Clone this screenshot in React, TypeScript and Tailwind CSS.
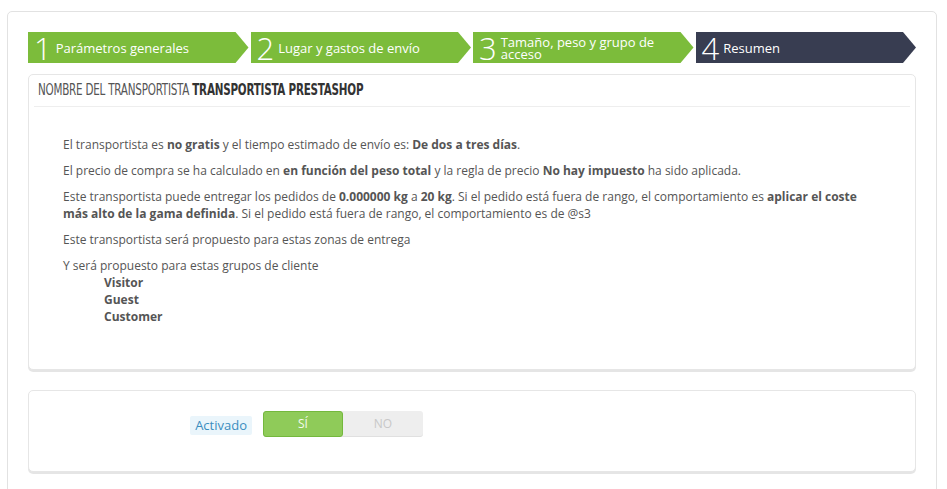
const steps = [
  { n: '1', label: 'Parámetros generales', active: false },
  { n: '2', label: 'Lugar y gastos de envío', active: false },
  { n: '3', label: 'Tamaño, peso y grupo de acceso', active: false },
  { n: '4', label: 'Resumen', active: true },
];

function Step({ n, label, active }: { n: string; label: string; active: boolean }) {
  return (
    <div
      className={`flex-1 h-[31px] flex items-center pl-[6px] pr-[22px] text-white [clip-path:polygon(0_0,calc(100%-13px)_0,100%_50%,calc(100%-13px)_100%,0_100%)] ${
        active ? 'bg-[#383d51]' : 'bg-[#7cbc3b]'
      }`}
    >
      <span className="text-[31px] font-light leading-none mr-[4px] mt-[1px]">{n}</span>
      <span className="text-[13px] leading-[12px] mt-[1px]">{label}</span>
    </div>
  );
}

export default function App() {
  return (
    <div className="bg-white min-h-screen pt-[11px] pl-[7px] pr-[10px] font-['Open_Sans',sans-serif] text-[#555]">
      <div className="border border-[#e2e2e2] rounded-[5px] px-[20px] pt-[20px] pb-[40px]">
        {/* Wizard steps */}
        <div className="flex gap-[2px]">
          {steps.map((s) => (
            <Step key={s.n} {...s} />
          ))}
        </div>

        {/* Summary panel */}
        <div className="mt-[11px] border border-[#e6e6e6] rounded-[5px] shadow-[0_2px_0_rgba(0,0,0,0.1)] px-[5px] pb-[44px] bg-white">
          <div className="h-[32px] flex items-center pl-[4px] border-b border-[#eee] overflow-hidden">
            <span className="inline-block whitespace-nowrap origin-left scale-x-[0.77] text-[15px] uppercase text-[#555] font-['Liberation_Sans_Narrow','DejaVu_Sans_Condensed','DejaVu_Sans',sans-serif] [font-stretch:condensed] tracking-[-0.3px]">
              Nombre del transportista <b className="text-[#333]">Transportista PrestaShop</b>
            </span>
          </div>
          <div className="pl-[29px] pr-[28px] pt-[29px] text-[12px] leading-[17px]">
            <p className="mb-[9px]">
              El transportista es <b>no gratis</b> y el tiempo estimado de envío es: <b>De dos a tres días</b>.
            </p>
            <p className="mb-[9px]">
              El precio de compra se ha calculado en <b>en función del peso total</b> y la regla de precio{' '}
              <b>No hay impuesto</b> ha sido aplicada.
            </p>
            <p className="mb-[9px]">
              Este transportista puede entregar los pedidos de <b>0.000000 kg</b> a <b>20 kg</b>. Si el pedido está
              fuera de rango, el comportamiento es <b>aplicar el coste más alto de la gama definida</b>. Si el pedido
              está fuera de rango, el comportamiento es de @s3
            </p>
            <p className="mb-[9px]">Este transportista será propuesto para estas zonas de entrega</p>
            <div>
              Y será propuesto para estas grupos de cliente
              <ul className="pl-[41px]">
                <li className="font-bold">Visitor</li>
                <li className="font-bold">Guest</li>
                <li className="font-bold">Customer</li>
              </ul>
            </div>
          </div>
        </div>

        {/* Active switch panel */}
        <div className="mt-[20px] border border-[#e6e6e6] rounded-[5px] shadow-[0_2px_0_rgba(0,0,0,0.1)] h-[82px] flex items-start pt-[20px] bg-white">
          <div className="w-[223px] flex justify-end pt-[5px]">
            <span className="bg-[#eaf5fb] text-[#3a8dbf] text-[13px] leading-[19px] px-[5px] rounded-[2px]">
              Activado
            </span>
          </div>
          <div className="ml-[11px] flex h-[26px] w-[160px] rounded-[3px] bg-[#eee] shadow-[inset_0_-1px_0_rgba(0,0,0,0.06)] text-[12px] uppercase">
            <span className="w-1/2 flex items-center justify-center bg-[#8fcb59] border border-[#74b83d] rounded-[3px] text-[#f4faef]">
              Sí
            </span>
            <span className="w-1/2 flex items-center justify-center text-[#c8c8c8]">No</span>
          </div>
        </div>
      </div>
    </div>
  );
}
